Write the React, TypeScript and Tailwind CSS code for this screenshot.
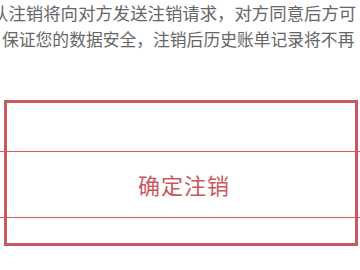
export default function App() {
    return (
        <div className="relative w-[360px] h-[270px] overflow-hidden bg-white font-['Noto_Sans_CJK_SC',sans-serif]">
            <div className="leading-[27px] text-[#666666] whitespace-nowrap">
                <p className="-ml-[9px] -mt-[1px] text-[17.4px]">认注销将向对方发送注销请求，对方同意后方可</p>
                <p className="ml-[2px] text-[16.8px]">保证您的数据安全，注销后历史账单记录将不再</p>
            </div>

            {/* confirm row */}
            <div className="mt-[98px] h-px bg-[#e0545c]" />
            <div className="h-[65px] flex items-center justify-center">
                <span className="text-[22px] text-[#c9575c] tracking-[1px] ml-[8px]">确定注销</span>
            </div>
            <div className="h-px bg-[#e0545c]" />

            {/* highlight frame */}
            <div className="absolute left-[4px] top-[100px] w-[354px] h-[146px] border-[3px] border-[#c65a62]" />
        </div>
    )
}
